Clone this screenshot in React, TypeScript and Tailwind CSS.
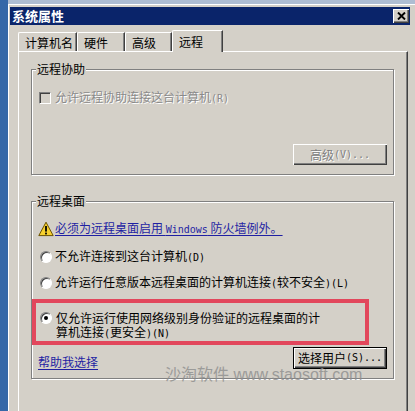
import React from 'react';

// half-width latin runs (SimSun style, 6px per char)
const A = ({ children }: { children: React.ReactNode }) => (
  <span className="font-['DejaVu_Sans_Mono',monospace] text-[10px]">{children}</span>
);

const Radio = ({ checked }: { checked?: boolean }) => (
  <span className="flex h-[12px] w-[12px] shrink-0 items-center justify-center rounded-full border border-t-[#808080] border-l-[#808080] border-r-white border-b-white bg-white shadow-[inset_1px_1px_0_#404040]">
    {checked && <span className="h-[4px] w-[4px] rounded-full bg-black" />}
  </span>
);

const Button = ({ children, disabled }: { children: React.ReactNode; disabled?: boolean }) =>
  disabled ? (
    <div className="flex h-[21px] w-[94px] items-center justify-center bg-[#d4d0c8] text-[#808080] shadow-[inset_1px_1px_0_#ffffff,inset_-1px_-1px_0_#404040,inset_-2px_-2px_0_#808080] [text-shadow:1px_1px_0_#ffffff]">
      {children}
    </div>
  ) : (
    <div className="flex h-[22px] w-[94px] items-center justify-center border border-black bg-[#d4d0c8] text-black shadow-[inset_1px_1px_0_#ffffff,inset_-1px_-1px_0_#404040,inset_-2px_-2px_0_#808080]">
      {children}
    </div>
  );

const tabs = [
  { label: '计算机名', w: 'w-[59px]' },
  { label: '硬件', w: 'w-[48px]' },
  { label: '高级', w: 'w-[47px]' },
];

export default function App() {
  return (
    <div className="relative flex h-[411px] w-[415px] overflow-hidden bg-[#3568a8] font-['Noto_Sans_CJK_SC','Liberation_Sans',sans-serif] text-[12px] leading-[14px] text-black">
      <div className="w-[8px] shrink-0" />
      <div className="flex flex-1 flex-col">
        <div className="h-[4px] bg-[#aebdd2]" />
        <div className="flex flex-1 flex-col border-t border-l border-white bg-[#d4d0c8] pt-[2px] pl-[1px]">
          {/* title bar */}
          <div className="mr-[5px] flex h-[18px] items-center justify-between bg-[#0a246a] pl-[2px] pr-[1px]">
            <span className="text-[13px] font-bold leading-[18px] text-white">系统属性</span>
            <div className="flex h-[14px] w-[16px] items-center justify-center bg-[#d4d0c8] shadow-[inset_1px_1px_0_#ffffff,inset_-1px_-1px_0_#404040,inset_-2px_-2px_0_#808080]">
              <svg width="9" height="8" viewBox="0 0 9 8">
                <path d="M1 0.5 L8 7.5 M8 0.5 L1 7.5" stroke="#000" strokeWidth="1.9" />
              </svg>
            </div>
          </div>

          <div className="flex flex-1 flex-col pl-[8px] pr-[7px] pt-[5px]">
            {/* tabs */}
            <div className="flex h-[21px] items-end">
              {tabs.map((t) => (
                <div
                  key={t.label}
                  className={`${t.w} h-[19px] rounded-tl-[2px] border-t border-l border-r border-white border-r-[#404040] pl-[6px] pt-[3px] shadow-[inset_-1px_0_0_#808080]`}
                >
                  {t.label}
                </div>
              ))}
              <div className="relative z-10 -mb-[1px] h-[22px] w-[51px] rounded-tl-[2px] border-t border-l border-r border-white border-r-[#404040] bg-[#d4d0c8] pl-[6px] pt-[4px] shadow-[inset_-1px_0_0_#808080]">
                远程
              </div>
            </div>

            {/* tab panel */}
            <div className="flex flex-1 flex-col border-t border-l border-r border-white border-r-[#404040] shadow-[inset_-1px_0_0_#808080]">
              {/* 远程协助 */}
              <div className="relative ml-[12px] mt-[17px] flex h-[106px] w-[363px] flex-col border border-[#808080] shadow-[inset_1px_1px_0_#ffffff,1px_1px_0_#ffffff]">
                <span className="absolute left-[4px] top-[-8px] bg-[#d4d0c8] px-[1px]">远程协助</span>
                <div className="mt-[20px] flex items-center gap-[4px] pl-[7px]">
                  <span className="h-[12px] w-[12px] border border-t-[#808080] border-l-[#808080] border-r-white border-b-white shadow-[inset_1px_1px_0_#404040]" />
                  <span className="text-[#8a8a8a] [text-shadow:1px_1px_0_#ffffff]">
                    允许远程协助连接这台计算机<A>(R)</A>
                  </span>
                </div>
                <div className="mt-auto mb-[9px] flex justify-end pr-[6px]">
                  <Button disabled>
                    高级<A>(V)...</A>
                  </Button>
                </div>
              </div>

              {/* 远程桌面 */}
              <div className="relative ml-[12px] mt-[26px] flex h-[178px] w-[363px] flex-col border border-[#808080] shadow-[inset_1px_1px_0_#ffffff,1px_1px_0_#ffffff]">
                <span className="absolute left-[4px] top-[-8px] bg-[#d4d0c8] px-[1px]">远程桌面</span>

                <div className="mt-[19px] flex h-[16px] items-center gap-[1px] pl-[6px]">
                  <svg width="16" height="16" viewBox="0 0 16 16" className="shrink-0">
                    <path d="M8 1.2 L15.2 14.6 H0.8 Z" fill="#f6d02e" stroke="#6b5200" strokeWidth="1" strokeLinejoin="round" />
                    <rect x="7.1" y="5" width="1.8" height="5.6" fill="#000" />
                    <rect x="7.1" y="11.6" width="1.8" height="1.8" fill="#000" />
                  </svg>
                  <span className="text-[#1f1fa3] underline underline-offset-[2px]">
                    必须为远程桌面启用 <A>Windows</A> 防火墙例外。
                  </span>
                </div>

                <div className="mt-[12px] flex h-[16px] items-center gap-[3px] pl-[8px]">
                  <Radio />
                  <span>
                    不允许连接到这台计算机<A>(D)</A>
                  </span>
                </div>

                <div className="mt-[10px] flex h-[16px] items-center gap-[3px] pl-[8px]">
                  <Radio />
                  <span>
                    允许运行任意版本远程桌面的计算机连接<A>(</A>较不安全<A>)(L)</A>
                  </span>
                </div>

                <div className="mt-[8px] flex h-[46px] w-[337px] items-start gap-[4px] border-4 border-[#e2475c] pl-[4px] pt-[8px]">
                  <span className="mt-[1px]">
                    <Radio checked />
                  </span>
                  <div className="flex flex-col leading-[14px]">
                    <span>仅允许运行使用网络级别身份验证的远程桌面的计</span>
                    <span>
                      算机连接<A>(</A>更安全<A>)(N)</A>
                    </span>
                  </div>
                </div>

                <div className="mt-[2px] flex items-start justify-between pl-[6px] pr-[6px]">
                  <span className="mt-[8px] leading-[13px] text-[#1f1fa3] underline underline-offset-[2px]">帮助我选择</span>
                  <Button>
                    选择用户<A>(S)...</A>
                  </Button>
                </div>
              </div>
            </div>
          </div>
        </div>
      </div>

      {/* watermark */}
      <div className="pointer-events-none absolute left-[165px] top-[366px] whitespace-nowrap font-['Liberation_Sans','Noto_Sans_CJK_SC',sans-serif] text-[16px] leading-[18px] text-[#8e8e8e] opacity-80">
        沙淘软件 www.staosoft.com
      </div>
    </div>
  );
}
